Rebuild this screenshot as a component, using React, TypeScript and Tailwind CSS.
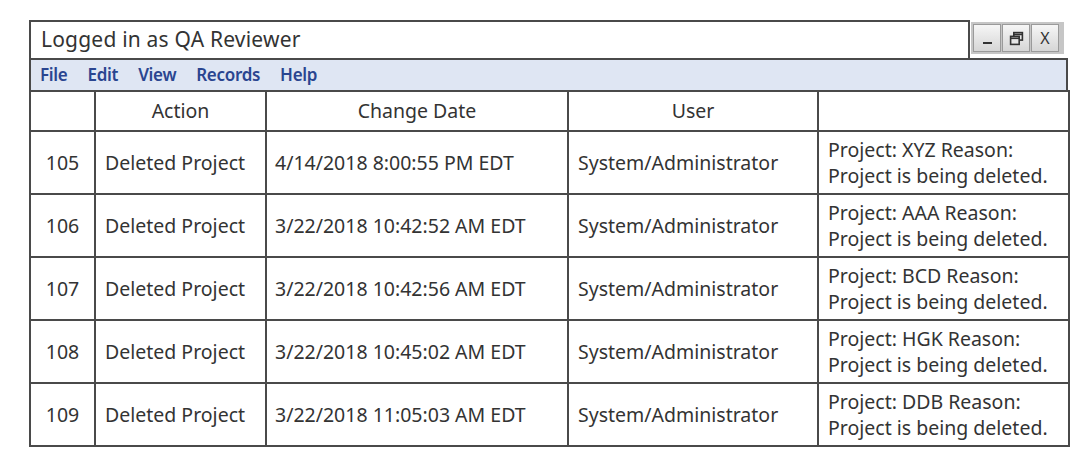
import React from "react";

const rows = [
  { id: "105", date: "4/14/2018 8:00:55 PM EDT", code: "XYZ" },
  { id: "106", date: "3/22/2018 10:42:52 AM EDT", code: "AAA" },
  { id: "107", date: "3/22/2018 10:42:56 AM EDT", code: "BCD" },
  { id: "108", date: "3/22/2018 10:45:02 AM EDT", code: "HGK" },
  { id: "109", date: "3/22/2018 11:05:03 AM EDT", code: "DDB" },
];

function WinButton({ children }: { children: React.ReactNode }) {
  return (
    <div className="flex h-[28px] w-[28px] items-center justify-center border border-[#9a9a9a] bg-gradient-to-b from-[#f6f6f6] to-[#d6d6d6] text-[#333]">
      {children}
    </div>
  );
}

export default function App() {
  const cell = "border-2 border-[#4a4a4a]";
  return (
    <div className="min-h-[465px] w-[1080px] bg-white pt-[20px] pl-[29px] font-['Noto_Sans','Open_Sans',sans-serif] text-[#333]">
      <div className="w-[1039px]">
        {/* title */}
        <div className="flex h-[38px]">
          <div className="flex flex-1 items-center border-l-2 border-t-2 border-r-2 border-[#4a4a4a] pl-[10px] text-[21px] tracking-[0.2px]">
            Logged in as QA Reviewer
          </div>
          <div className="w-[98px] pt-[2px] pl-[1px]">
            <div className="flex h-[32px] w-[93px] items-center gap-[1px] bg-[#c6c6c6] px-[2px]">
              <WinButton>
                <span className="mt-[10px] block h-[2px] w-[9px] bg-[#333]" />
              </WinButton>
              <WinButton>
                <svg width="15" height="15" viewBox="0 0 14 14" fill="none" stroke="#333" strokeWidth="1.5">
                  <rect x="4.5" y="1.5" width="8" height="7" />
                  <rect x="1.5" y="5" width="8" height="7.5" fill="#e6e6e6" />
                  <line x1="1.5" y1="6.8" x2="9.5" y2="6.8" />
                  <line x1="4.5" y1="3.2" x2="12.5" y2="3.2" />
                </svg>
              </WinButton>
              <WinButton>
                <span className="text-[16px] leading-none">X</span>
              </WinButton>
            </div>
          </div>
        </div>
        {/* menu */}
        <div className="flex h-[34px] items-center gap-[20px] border-2 border-[#4a4a4a] bg-[#dfe6f3] pl-[9px] text-[17px] font-semibold tracking-[-0.3px] text-[#2a4590]">
          <span>File</span>
          <span>Edit</span>
          <span>View</span>
          <span>Records</span>
          <span>Help</span>
        </div>
        {/* table */}
        <table className="-mt-[2px] w-[1039px] table-fixed border-collapse text-[19.5px]">
          <colgroup>
            <col className="w-[65px]" />
            <col className="w-[171px]" />
            <col className="w-[302px]" />
            <col className="w-[250px]" />
            <col className="w-[251px]" />
          </colgroup>
          <thead>
            <tr className="h-[40px]">
              <th className={`${cell} font-normal`}></th>
              <th className={`${cell} font-normal`}>Action</th>
              <th className={`${cell} font-normal`}>Change Date</th>
              <th className={`${cell} font-normal`}>User</th>
              <th className={`${cell} font-normal`}></th>
            </tr>
          </thead>
          <tbody>
            {rows.map((r) => (
              <tr key={r.id} className="h-[63px]">
                <td className={`${cell} text-center`}>{r.id}</td>
                <td className={`${cell} pl-[9px]`}>Deleted Project</td>
                <td className={`${cell} pl-[8px]`}>{r.date}</td>
                <td className={`${cell} pl-[9px]`}>System/Administrator</td>
                <td className={`${cell} pl-[9px] leading-[26px]`}>
                  Project: {r.code} Reason:
                  <br />
                  Project is being deleted.
                </td>
              </tr>
            ))}
          </tbody>
        </table>
      </div>
    </div>
  );
}
